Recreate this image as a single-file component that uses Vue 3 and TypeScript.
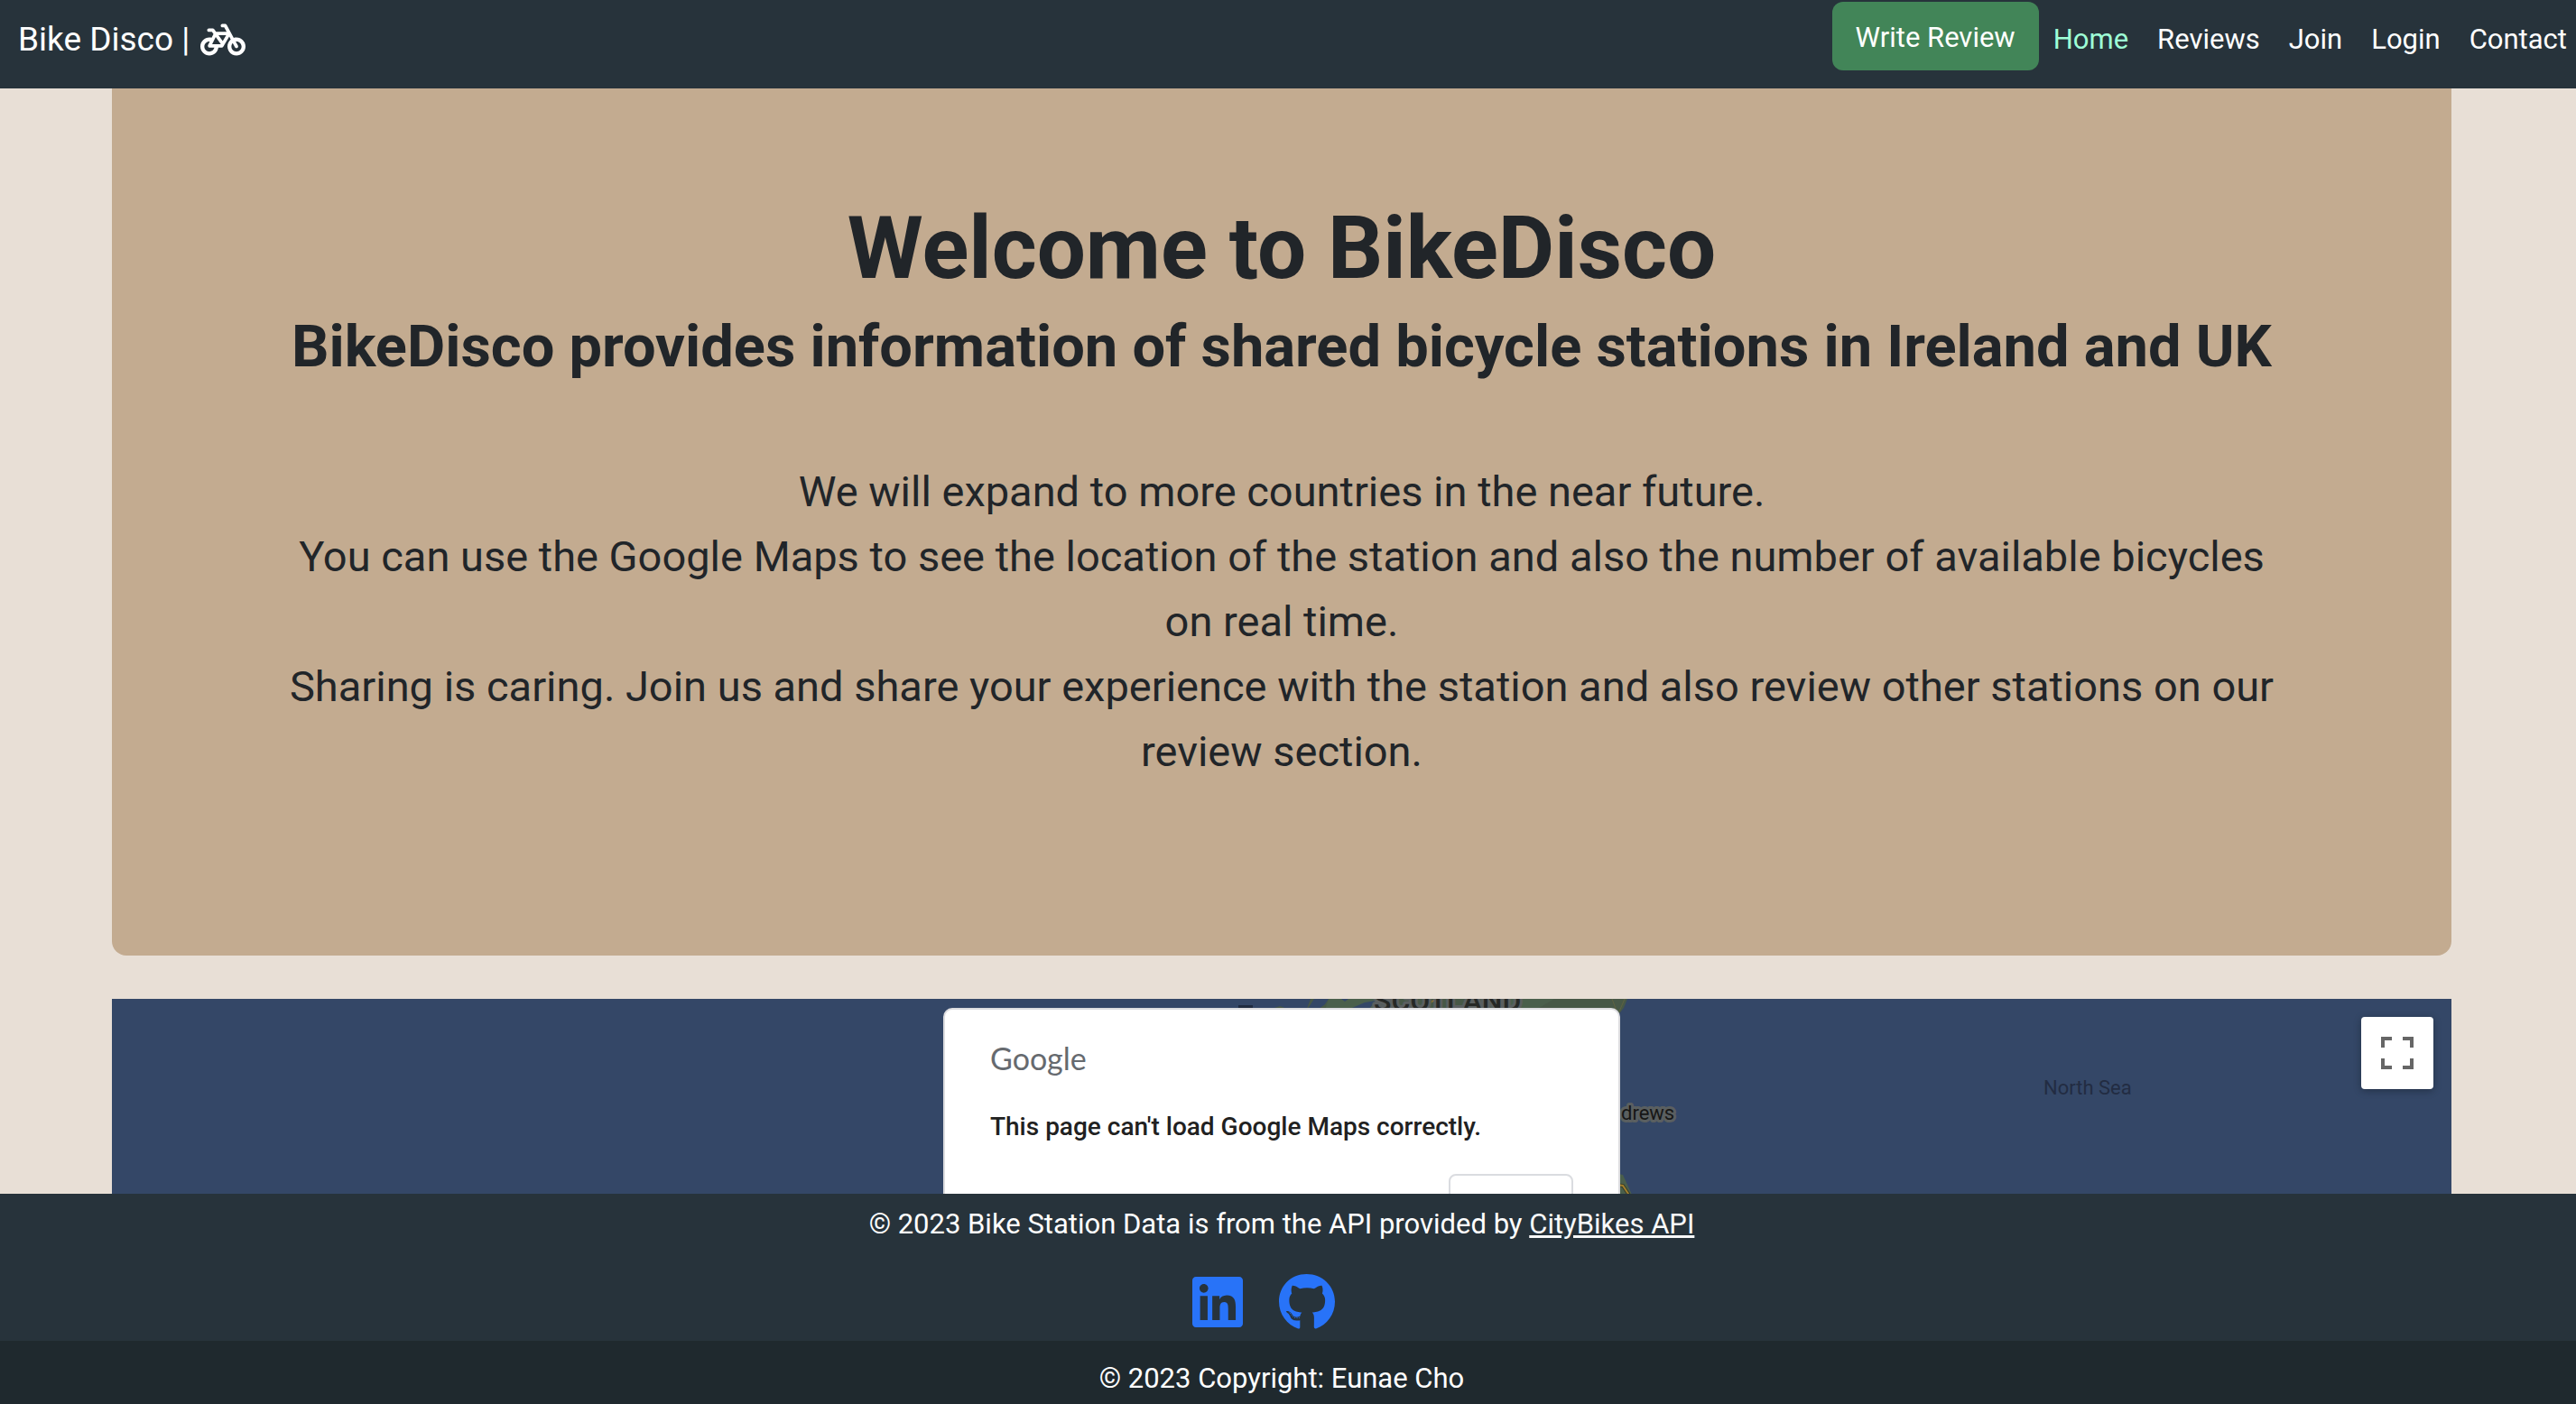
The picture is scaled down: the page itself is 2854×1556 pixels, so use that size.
<script setup lang="ts">
interface NavLink {
  label: string
  href: string
  active?: boolean
}

const links: NavLink[] = [
  { label: 'Home', href: '#home', active: true },
  { label: 'Reviews', href: '#reviews' },
  { label: 'Join', href: '#join' },
  { label: 'Login', href: '#login' },
  { label: 'Contact', href: '#contact' },
]

const intro: string[] = [
  'We will expand to more countries in the near future.',
  'You can use the Google Maps to see the location of the station and also the number of available bicycles on real time.',
  'Sharing is caring. Join us and share your experience with the station and also review other stations on our review section.',
]
</script>

<template>
  <div class="page">
    <header class="navbar">
      <a class="brand" href="#home">
        <span>Bike Disco |</span>
        <svg class="bike" viewBox="0 0 640 512" aria-hidden="true">
          <path fill="currentColor" d="M312 32c-13.3 0-24 10.7-24 24s10.7 24 24 24h25.7l34.6 64H222.9l-27.4-38C191 99.7 183.7 96 176 96H120c-13.3 0-24 10.7-24 24s10.7 24 24 24h43.7l22.1 30.7-26.6 53.1c-10-2.5-20.5-3.8-31.2-3.8C57.3 224 0 281.3 0 352s57.3 128 128 128c65.3 0 119.1-48.9 127-112h49c8.5 0 16.3-4.5 20.7-11.8l84.8-143.5 21.7 40.1C402.4 276.3 384 312 384 352c0 70.7 57.3 128 128 128s128-57.3 128-128s-57.3-128-128-128c-13.5 0-26.5 2.1-38.7 6L375.4 48.8C369.8 38.4 359 32 347.2 32H312zM458.6 303.7l32.3 59.7c6.3 11.7 20.9 16 32.5 9.7s16-20.9 9.7-32.5l-32.3-59.7c3.6-.6 7.4-.9 11.2-.9c39.8 0 72 32.2 72 72s-32.2 72-72 72s-72-32.2-72-72c0-18.6 7-35.5 18.6-48.3zM133.2 368h65c-7.3 32.1-36 56-70.2 56c-39.8 0-72-32.2-72-72s32.2-72 72-72c1.7 0 3.4 .1 5.1 .2l-24.2 48.5c-9 18.1 4.1 39.4 24.3 39.4zm33.7-48l50.7-101.3 72.9 101.2-.1 .1H166.8zm90.6-128H365.9L317 274.8 257.4 192z" />
        </svg>
      </a>
      <nav class="menu">
        <button type="button" class="write">Write Review</button>
        <a
          v-for="link in links"
          :key="link.label"
          :href="link.href"
          class="nav-link"
          :class="{ active: link.active }"
        >{{ link.label }}</a>
      </nav>
    </header>

    <main class="content">
      <section class="hero">
        <h1>Welcome to BikeDisco</h1>
        <h2>BikeDisco provides information of shared bicycle stations in Ireland and UK</h2>
        <p v-for="line in intro" :key="line">{{ line }}</p>
      </section>

      <section class="map">
        <svg class="terrain" viewBox="0 0 2592 217" preserveAspectRatio="xMidYMin slice">
          <path fill="#475847" d="M1328 0h351l-4 10-8 10h-80v-4h-265z" />
          <path fill="#4a5f4c" d="M1348 0h60l-12 12h-52zM1528 0h70l-20 12h-60z" />
          <path fill="#344767" d="M1332 0h16l-4 6-8 6h-12zM1388 4l12-2-6 8h-20zM1362 0h8l-4 3z" />
          <path fill="#475847" d="M1288 10l6-2 8 3z" />
          <path fill="#1f2b40" d="M1248 7h16v4h-16z" />
          <path fill="none" stroke="#8a7233" stroke-width="2" d="M1452 9l14-8" />
          <path fill="none" stroke="#5f6340" stroke-width="1" d="M1662 0l6 16M1676 0l-6 14" />
          <text class="country" x="1398" y="13">SCOTLAND</text>
          <path fill="#4a5f4c" d="M1660 192l14 3 10 22h-24z" />
          <path fill="none" stroke="#353c2b" stroke-width="4" d="M1660 205l14 2 8 12" />
          <path fill="none" stroke="#a07e2d" stroke-width="2" d="M1660 205l14 2 8 12" />
          <text class="town" x="1672" y="134">drews</text>
          <text class="sea" x="2140" y="106">North Sea</text>
        </svg>

        <div class="dialog" role="dialog" aria-labelledby="map-message">
          <div class="logo">Google</div>
          <div id="map-message" class="message">This page can't load Google Maps correctly.</div>
          <button type="button" class="ok" aria-label="Dismiss"></button>
        </div>

        <button type="button" class="fullscreen" aria-label="Toggle fullscreen view">
          <svg viewBox="0 0 18 18" aria-hidden="true">
            <path fill="#666" d="M0 0v6h2V2h4V0H0zm16 0h-4v2h4v4h2V0h-2zm0 16h-4v2h6v-6h-2v4zM2 12H0v6h6v-2H2v-4z" />
          </svg>
        </button>
      </section>
    </main>

    <footer class="footer">
      <div class="credits">
        <div>© 2023 Bike Station Data is from the API provided by <a href="#citybikes">CityBikes API</a></div>
        <div class="social">
          <a href="#linkedin" aria-label="LinkedIn">
            <svg viewBox="0 0 448 512" aria-hidden="true">
              <path fill="currentColor" d="M416 32H31.9C14.3 32 0 46.5 0 64.3v383.4C0 465.5 14.3 480 31.9 480H416c17.6 0 32-14.5 32-32.3V64.3c0-17.8-14.4-32.3-32-32.3zM135.4 416H69V202.2h66.5V416zm-33.2-243c-21.3 0-38.5-17.3-38.5-38.5S80.9 96 102.2 96c21.2 0 38.5 17.3 38.5 38.5 0 21.3-17.2 38.5-38.5 38.5zm282.1 243h-66.4V312c0-24.8-.5-56.7-34.5-56.7-34.6 0-39.9 27-39.9 54.9V416h-66.4V202.2h63.7v29.2h.9c8.9-16.8 30.6-34.5 62.9-34.5 67.2 0 79.7 44.3 79.7 101.9V416z" />
            </svg>
          </a>
          <a href="#github" aria-label="GitHub">
            <svg viewBox="0 0 496 512" aria-hidden="true">
              <path fill="currentColor" d="M165.9 397.4c0 2-2.3 3.6-5.2 3.6-3.3.3-5.6-1.3-5.6-3.6 0-2 2.3-3.6 5.2-3.6 3-.3 5.6 1.3 5.6 3.6zm-31.1-4.5c-.7 2 1.3 4.3 4.3 4.9 2.6 1 5.6 0 6.2-2s-1.3-4.3-4.3-5.2c-2.6-.7-5.5.3-6.2 2.3zm44.2-1.7c-2.9.7-4.9 2.6-4.6 4.9.3 2 2.9 3.3 5.9 2.6 2.9-.7 4.9-2.6 4.6-4.6-.3-1.9-3-3.2-5.9-2.9zM244.8 8C106.1 8 0 113.3 0 252c0 110.9 69.8 205.8 169.5 239.2 12.8 2.3 17.3-5.6 17.3-12.1 0-6.2-.3-40.4-.3-61.4 0 0-70 15-84.7-29.8 0 0-11.4-29.1-27.8-36.6 0 0-22.9-15.7 1.6-15.4 0 0 24.9 2 38.6 25.8 21.9 38.6 58.6 27.5 72.9 20.9 2.3-16 8.8-27.1 16-33.7-55.9-6.2-112.3-14.3-112.3-110.5 0-27.5 7.6-41.3 23.6-58.9-2.6-6.5-11.1-33.3 2.6-67.9 20.9-6.5 69 27 69 27 20-5.6 41.5-8.5 62.8-8.5s42.8 2.9 62.8 8.5c0 0 48.1-33.6 69-27 13.7 34.7 5.2 61.4 2.6 67.9 16 17.7 25.8 31.5 25.8 58.9 0 96.5-58.9 104.2-114.8 110.5 9.2 7.9 17 22.9 17 46.4 0 33.7-.3 75.4-.3 83.6 0 6.5 4.6 14.4 17.3 12.1C428.2 457.8 496 362.9 496 252 496 113.3 383.5 8 244.8 8zM97.2 352.9c-1.3 1-1 3.3.7 5.2 1.6 1.6 3.9 2.3 5.2 1 1.3-1 1-3.3-.7-5.2-1.6-1.6-3.9-2.3-5.2-1zm-10.8-8.1c-.7 1.3.3 2.9 2.3 3.9 1.6 1 3.6.7 4.3-.7.7-1.3-.3-2.9-2.3-3.9-2-.6-3.6-.3-4.3.7zm32.4 35.6c-1.6 1.3-1 4.3 1.3 6.2 2.3 2.3 5.2 2.6 6.5 1 1.3-1.3.7-4.3-1.3-6.2-2.2-2.3-5.2-2.6-6.5-1zm-11.4-14.7c-1.6 1-1.6 3.6 0 5.9 1.6 2.3 4.3 3.3 5.6 2.3 1.6-1.3 1.6-3.9 0-6.2-1.4-2.3-4-3.3-5.6-2z" />
            </svg>
          </a>
        </div>
      </div>
      <div class="copyright">© 2023 Copyright: Eunae Cho</div>
    </footer>
  </div>
</template>

<style>
body {
  margin: 0;
  background: #e8dfd6;
}
</style>

<style scoped>
.page {
  display: flex;
  flex-direction: column;
  height: 100vh;
  overflow: hidden;
  color: #212529;
  font-family: Roboto, "Noto Sans", sans-serif;
  font-size: 31px;
  line-height: 48px;
}

button {
  border: 0;
  font: inherit;
  cursor: pointer;
}

.navbar {
  display: flex;
  justify-content: space-between;
  align-items: flex-start;
  box-sizing: border-box;
  flex: none;
  height: 98px;
  padding: 2px 10px 0 20px;
  background: #27333b;
  color: #fff;
}

.brand {
  display: flex;
  align-items: center;
  gap: 12px;
  padding-top: 12px;
  color: #fff;
  font-size: 37px;
  line-height: 60px;
  text-decoration: none;
}

.bike {
  width: 50px;
  height: 40px;
}

.menu {
  display: flex;
  align-items: flex-start;
}

.write {
  padding: 16px 26px 12px;
  border-radius: 12px;
  background: #428558;
  color: #fff;
}

.nav-link {
  padding: 18px 16px;
  color: #fff;
  text-decoration: none;
}

.nav-link:last-child {
  padding-right: 0;
}

.nav-link.active {
  color: #9effd6;
}

.content {
  display: flex;
  flex: 1;
  flex-direction: column;
  gap: 48px;
  min-height: 0;
  padding: 0 138px 0 124px;
  overflow: hidden;
  background: #e8dfd6;
}

.hero {
  flex: none;
  padding: 120px 190px 190px;
  border-radius: 0 0 16px 16px;
  background: #c3ab90;
  font-size: 47px;
  line-height: 72px;
  text-align: center;
}

h1 {
  margin: 0 0 12px;
  font-size: 96px;
  font-weight: 700;
  line-height: 115px;
}

h2 {
  margin: 0 0 86px;
  font-size: 65px;
  font-weight: 700;
  line-height: 78px;
}

p {
  margin: 0;
}

.map {
  position: relative;
  flex: 1;
  min-height: 0;
  overflow: hidden;
  background: #344767;
  font-family: Roboto, sans-serif;
}

.terrain {
  position: absolute;
  inset: 0;
  width: 100%;
  height: 217px;
}

.country,
.town {
  paint-order: stroke;
  stroke: #5a5f60;
  stroke-width: 6px;
  stroke-linejoin: round;
}

.country {
  fill: #262826;
  font-size: 32px;
  font-weight: 500;
}

.town {
  fill: #161616;
  font-size: 22px;
}

.sea {
  fill: #222c42;
  font-size: 22px;
}

.dialog {
  position: relative;
  display: flex;
  flex-direction: column;
  align-items: flex-start;
  box-sizing: border-box;
  width: 750px;
  height: 300px;
  margin: 10px auto 0;
  padding: 30px 50px;
  border: 2px solid #dcdcdf;
  border-radius: 10px;
  background: #fff;
}

.logo {
  color: #666a6f;
  font-family: Lato, sans-serif;
  font-size: 34px;
  line-height: 48px;
}

.message {
  margin-top: 28px;
  color: #212121;
  font-size: 28px;
  font-weight: 500;
}

.ok {
  align-self: flex-end;
  width: 138px;
  height: 72px;
  margin-top: 28px;
  border: 2px solid #dadce0;
  border-radius: 8px;
  background: #fff;
}

.fullscreen {
  position: absolute;
  top: 20px;
  right: 20px;
  display: grid;
  place-items: center;
  width: 80px;
  height: 80px;
  padding: 0;
  border-radius: 4px;
  background: #fff;
  box-shadow: 0 2px 8px rgba(0, 0, 0, 0.3);
}

.fullscreen svg {
  width: 36px;
  height: 36px;
}

.footer {
  flex: none;
  background: #27333b;
  color: #fff;
  text-align: center;
}

.credits {
  padding: 10px 14px 11px 0;
}

.credits a {
  color: #f8f9fa;
}

.social {
  display: flex;
  justify-content: center;
  margin-top: 30px;
}

.social a {
  margin-right: 40px;
  color: #2873f8;
}

.social svg {
  display: block;
  height: 64px;
}

.copyright {
  padding: 18px 14px 4px 0;
  background: #1f292e;
}
</style>
